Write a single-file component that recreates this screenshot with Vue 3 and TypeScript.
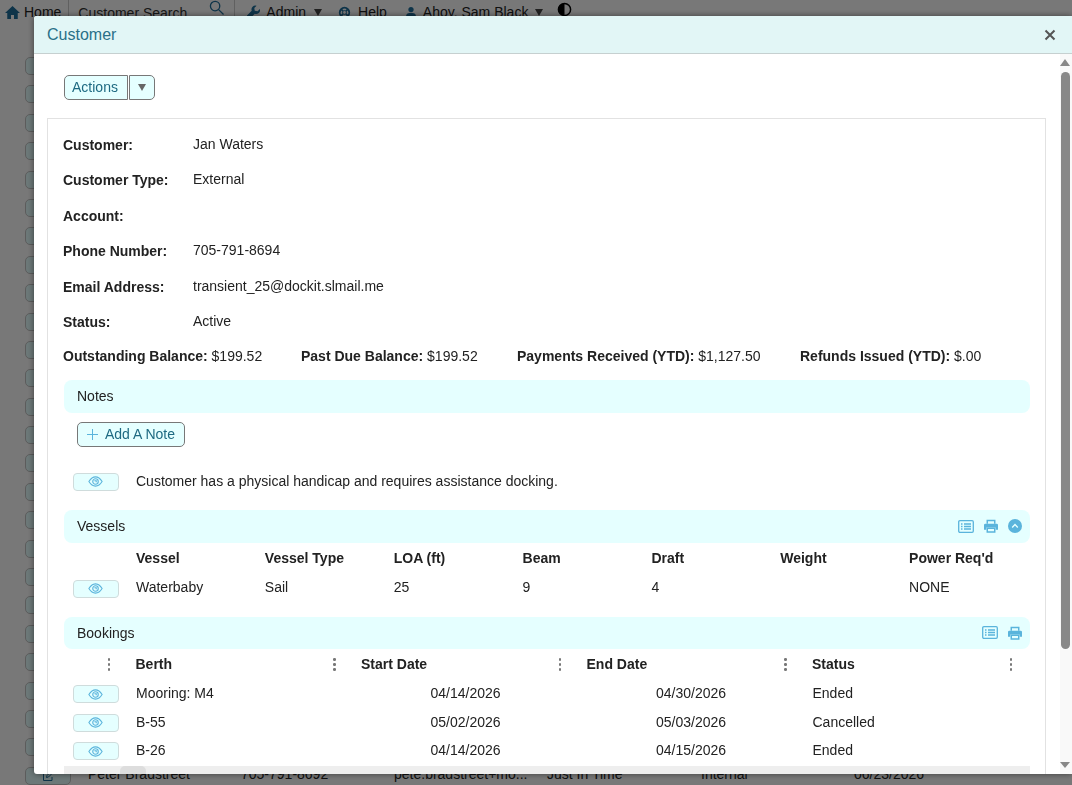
<script setup lang="ts">
const bgRows = Array.from({ length: 26 }, (_, i) => i)

const details: [string, string][] = [
  ['Customer:', 'Jan Waters'],
  ['Customer Type:', 'External'],
  ['Account:', ''],
  ['Phone Number:', '705-791-8694'],
  ['Email Address:', 'transient_25@dockit.slmail.me'],
  ['Status:', 'Active'],
]

const balances = [
  { label: 'Outstanding Balance:', value: '$199.52', width: 238 },
  { label: 'Past Due Balance:', value: '$199.52', width: 216 },
  { label: 'Payments Received (YTD):', value: '$1,127.50', width: 283 },
  { label: 'Refunds Issued (YTD):', value: '$.00', width: 200 },
]

const vesselCols = ['Vessel', 'Vessel Type', 'LOA (ft)', 'Beam', 'Draft', 'Weight', "Power Req'd"]
const vesselRow = ['Waterbaby', 'Sail', '25', '9', '4', '', 'NONE']

const bookingCols = ['Berth', 'Start Date', 'End Date', 'Status']
const bookings = [
  ['Mooring: M4', '04/14/2026', '04/30/2026', 'Ended'],
  ['B-55', '05/02/2026', '05/03/2026', 'Cancelled'],
  ['B-26', '04/14/2026', '04/15/2026', 'Ended'],
]
</script>

<template>
  <div class="page">
    <nav class="nav">
      <svg class="nav-ico home" viewBox="0 0 16 16"><path d="M8 1 0 8.4h2.4V15h4v-4.4h3.200V15h4V8.400H16z" /></svg>
      <span class="nav-home">Home</span>
      <span class="nav-search">Customer Search</span>
      <svg class="nav-mag" viewBox="0 0 16 16"><circle cx="6.500" cy="6.500" r="5" /><path d="m10 10 5.500 5.500" /></svg>
      <span class="nav-sep"></span>
      <svg class="nav-ico wrench" viewBox="0 0 16 16"><path d="M15.800 4.200 13 7 9.500 6.500 9 3l2.800-2.800a4.800 4.800 0 0 0-6 6.200L.6 11.600a2.600 2.600 0 0 0 3.800 3.800l5.200-5.200a4.800 4.800 0 0 0 6.200-6z" /></svg>
      <span class="nav-admin">Admin</span>
      <span class="nav-caret"></span>
      <svg class="nav-ico help" viewBox="0 0 16 16"><path fill-rule="evenodd" d="M8 1a7 7 0 1 0 0 14A7 7 0 0 0 8 1zm0 2.200c1 0 1.900.3 2.600.8L9.200 5.400a2.900 2.900 0 0 0-2.400 0L5.400 4A4.800 4.800 0 0 1 8 3.200zM4 5.400l1.400 1.400a2.900 2.900 0 0 0 0 2.400L4 10.600a4.800 4.800 0 0 1 0-5.200zm8 0a4.800 4.800 0 0 1 0 5.200l-1.400-1.400a2.900 2.900 0 0 0 0-2.400zM8 6.200a1.800 1.800 0 1 1 0 3.600 1.800 1.800 0 0 1 0-3.600zm-1.200 4.400a2.900 2.900 0 0 0 2.400 0l1.400 1.400a4.800 4.800 0 0 1-5.200 0z" /></svg>
      <span class="nav-help">Help</span>
      <svg class="nav-ico user" viewBox="0 0 16 16"><circle cx="8" cy="4" r="3.500" /><path d="M1.500 15v-2.500C1.500 10 3.500 8.500 6 8.500h4c2.500 0 4.500 1.500 4.500 4V15z" /></svg>
      <span class="nav-user">Ahoy, Sam Black</span>
      <span class="nav-caret"></span>
      <svg class="nav-contrast" viewBox="0 0 16 16"><circle cx="8" cy="8" r="6.500" fill="#fff" stroke="#000" stroke-width="1.600" /><path d="M8 1.500a6.500 6.500 0 0 0 0 13z" fill="#000" /></svg>
    </nav>
    <div class="bg-rows">
      <div v-for="i in bgRows" :key="i" class="bg-row">
        <span class="bg-btn">
          <svg v-if="i === 25" class="bg-pen" viewBox="0 0 12 12"><path d="M10 7v3.500H1.500V2H5M4.500 7.500l.5-2L9.500 1 11 2.500 6.500 7z" /></svg>
        </span>
        <template v-if="i === 25">
          <span class="bg-c c1">Peter Bradstreet</span>
          <span class="bg-c c2">705-791-8692</span>
          <span class="bg-c c3">pete.bradstreet+mo...</span>
          <span class="bg-c c4">Just In Time</span>
          <span class="bg-c c5">Internal</span>
          <span class="bg-c c6">06/23/2026</span>
        </template>
      </div>
    </div>
  </div>

  <div class="overlay"></div>

  <section class="modal">
    <header class="modal-head">
      <span class="modal-title">Customer</span>
      <svg class="close" viewBox="0 0 12 12"><path d="m1.500 1.500 9 9m0-9-9 9" /></svg>
    </header>

    <div class="modal-main">
      <div class="content">
        <div class="actions">
          <button class="btn actions-btn">Actions</button>
          <button class="btn caret-btn"><span class="caret-mini"></span></button>
        </div>

        <div class="card">
          <div v-for="row in details" :key="row[0]" class="detail">
            <span class="detail-label">{{ row[0] }}</span>
            <span class="detail-value">{{ row[1] }}</span>
          </div>

          <div class="balances">
            <span v-for="b in balances" :key="b.label" class="balance" :style="{ width: b.width + 'px' }">
              <b>{{ b.label }}</b> {{ b.value }}
            </span>
          </div>

          <div class="band band-notes"><span>Notes</span></div>
          <button class="btn add-note">
            <svg class="plus" viewBox="0 0 11 11"><path d="M5.500 0v11M0 5.500h11" /></svg>
            Add A Note
          </button>
          <div class="note">
            <button class="eye-btn">
              <svg class="eye" viewBox="0 0 16 12"><path d="M.8 6C3 2.500 5.300 1 8 1s5 1.500 7.200 5C13 9.500 10.700 11 8 11S3 9.500.8 6z" /><circle cx="8" cy="6" r="3" /><path d="M6.800 5.200h2v1.600" /></svg>
            </button>
            <span class="lifted">Customer has a physical handicap and requires assistance docking.</span>
          </div>

          <div class="band band-vessels">
            <span>Vessels</span>
            <span class="band-icons">
              <svg class="ico-list" viewBox="0 0 16 13"><rect x=".7" y=".7" width="14.600" height="11.600" rx="1.200" /><path d="M3 4h1.500M6 4h7M3 6.500h1.500M6 6.500h7M3 9h1.500M6 9h7" /></svg>
              <svg class="ico-print" viewBox="0 0 15 14"><path class="paper" d="M3.500 4.500V1h8v3.500" /><path d="M0 6a1.500 1.500 0 0 1 1.500-1.500h12A1.500 1.500 0 0 1 15 6v5h-2.500V8.500h-10V11H0z" /><path class="paper" d="M3.500 9.500h8v4h-8z" /></svg>
              <svg class="ico-up" viewBox="0 0 15 15"><circle cx="7.500" cy="7.500" r="7.500" /><path d="m4.500 9 3-3 3 3" /></svg>
            </span>
          </div>
          <div class="vessel-grid vessel-head">
            <b v-for="c in vesselCols" :key="c">{{ c }}</b>
          </div>
          <div class="vessel-row">
            <button class="eye-btn">
              <svg class="eye" viewBox="0 0 16 12"><path d="M.8 6C3 2.500 5.300 1 8 1s5 1.500 7.200 5C13 9.500 10.700 11 8 11S3 9.500.8 6z" /><circle cx="8" cy="6" r="3" /><path d="M6.800 5.200h2v1.600" /></svg>
            </button>
            <div class="vessel-grid vessel-cells">
              <span v-for="(c, i) in vesselRow" :key="i">{{ c }}</span>
            </div>
          </div>

          <div class="band band-bookings">
            <span>Bookings</span>
            <span class="band-icons">
              <svg class="ico-list" viewBox="0 0 16 13"><rect x=".7" y=".7" width="14.600" height="11.600" rx="1.200" /><path d="M3 4h1.500M6 4h7M3 6.500h1.500M6 6.500h7M3 9h1.500M6 9h7" /></svg>
              <svg class="ico-print" viewBox="0 0 15 14"><path class="paper" d="M3.500 4.500V1h8v3.500" /><path d="M0 6a1.500 1.500 0 0 1 1.500-1.500h12A1.500 1.500 0 0 1 15 6v5h-2.500V8.500h-10V11H0z" /><path class="paper" d="M3.500 9.500h8v4h-8z" /></svg>
            </span>
          </div>
          <div class="book-head">
            <span class="kebab first"><i></i><i></i><i></i></span>
            <div v-for="c in bookingCols" :key="c" class="book-th">
              <b>{{ c }}</b>
              <span class="kebab"><i></i><i></i><i></i></span>
            </div>
          </div>
          <div v-for="b in bookings" :key="b[0]" class="book-row">
            <button class="eye-btn">
              <svg class="eye" viewBox="0 0 16 12"><path d="M.8 6C3 2.500 5.300 1 8 1s5 1.500 7.200 5C13 9.500 10.700 11 8 11S3 9.500.8 6z" /><circle cx="8" cy="6" r="3" /><path d="M6.800 5.200h2v1.600" /></svg>
            </button>
            <div class="book-cells lifted">
              <span>{{ b[0] }}</span>
              <span class="date">{{ b[1] }}</span>
              <span class="date">{{ b[2] }}</span>
              <span>{{ b[3] }}</span>
            </div>
          </div>
          <div class="hbar"><span class="hthumb"></span></div>
        </div>
      </div>

      <aside class="vbar">
        <span class="arrow-up"></span>
        <span class="vthumb"></span>
        <span class="arrow-down"></span>
      </aside>
    </div>
  </section>
</template>

<style>
html, body { margin: 0; height: 785px; overflow: hidden; background: #fff; }
</style>

<style scoped>
.page {
  height: 785px;
  overflow: hidden;
  font: 14px "Liberation Sans", Arial, sans-serif;
  color: #222;
}
.nav {
  display: flex;
  align-items: center;
  height: 24px;
  padding-left: 5px;
}
.nav-ico { fill: #1f6f9c; width: 15px; height: 15px; flex: none; }
.home { margin-right: 4px; }
.nav-search { margin-left: 7px; padding-left: 9px; border-left: 1px solid #ccc; height: 24px; line-height: 27px; width: 124px; color: #333; flex: none; }
.nav-mag { width: 15px; height: 15px; margin: -9px 0 0 7px; fill: none; stroke: #1f6f9c; stroke-width: 1.400; flex: none; }
.nav-sep { width: 1px; height: 24px; background: #ccc; margin: 0 12px 0 10px; flex: none; }
.wrench { width: 13px; height: 14px; }
.nav-admin { margin-left: 6px; }
.nav-caret {
  width: 0; height: 0; margin: 0 16px 0 8px; flex: none;
  border-left: 4px solid transparent;
  border-right: 4px solid transparent;
  border-top: 7px solid #444;
}
.help { width: 13px; height: 13px; margin-right: 7px; }
.nav-help { margin-right: 18px; }
.user { width: 12px; height: 13px; margin-right: 6px; }
.nav-user { margin-right: -1px; }
.nav-contrast { width: 15px; height: 15px; margin: -5px 0 0 -2px; flex: none; }

.bg-rows { padding-top: 33px; }
.bg-row { height: 28.400px; position: relative; }
.bg-btn {
  position: absolute; left: 25px; top: 0;
  width: 44px; height: 16px;
  border: 1px solid #c4c4c4; border-radius: 5px;
  background: #e5ffff;
  display: flex; align-items: center; justify-content: center;
}
.bg-pen { width: 12px; height: 12px; fill: none; stroke: #1f6f9c; stroke-width: 1; }
.bg-c { position: absolute; top: -1px; }
.c1 { left: 88px; }
.c2 { left: 241px; }
.c3 { left: 394px; }
.c4 { left: 547px; }
.c5 { left: 701px; }
.c6 { left: 854px; }

.overlay {
  position: fixed; inset: 0;
  background: rgba(0, 0, 0, 0.53);
}
.modal {
  position: fixed;
  left: 34px; top: 16px; right: 0;
  height: 758px;
  background: #fff;
  border-radius: 3px 0 0 3px;
  box-shadow: 0 0 6px rgba(0, 0, 0, .5);
  display: flex;
  flex-direction: column;
  overflow: hidden;
  font: 14px "Liberation Sans", Arial, sans-serif;
  color: #222;
}
.modal-head {
  height: 37px;
  flex: none;
  background: #e2f6f6;
  border-bottom: 1px solid #c6d0d0;
  display: flex;
  align-items: center;
  justify-content: space-between;
  padding: 0 16px 0 13px;
}
.modal-title { font-size: 16px; color: #2a7088; }
.close { width: 12px; height: 12px; fill: none; stroke: #555; stroke-width: 2; }
.modal-main { flex: 1; display: flex; min-height: 0; }
.content { flex: 1; min-width: 0; padding: 21px 14px 0 13px; overflow: hidden; }

.btn {
  font: inherit;
  color: #1e6a82;
  background: #e5ffff;
  border: 1px solid #777;
  border-radius: 5px;
  padding: 0;
  display: inline-flex;
  align-items: center;
  justify-content: center;
}
.actions { display: flex; gap: 1px; padding-left: 17px; height: 25px; margin-bottom: 18px; }
.actions-btn { width: 64px; height: 25px; border-radius: 5px 0 0 5px; padding: 0 2px 2px 0; }
.caret-btn { width: 26px; height: 25px; border-radius: 0 5px 5px 0; }
.caret-mini {
  width: 0; height: 0;
  border-left: 4px solid transparent;
  border-right: 4px solid transparent;
  border-top: 7px solid #666;
}

.card {
  border: 1px solid #e2e2e2;
  border-bottom: 0;
  padding: 7.900px 15px 0;
  height: 700px;
  box-sizing: border-box;
}
.detail { display: flex; align-items: center; height: 35.400px; }
.detail-label { width: 130px; font-weight: 700; padding-top: 1px; }
.detail-value { margin-top: -1px; }

.balances { display: flex; height: 20px; margin-top: 6.700px; align-items: center; }
.balance { flex: none; white-space: nowrap; }

.band {
  margin-left: 1px;
  height: 33px;
  background: #e5ffff;
  border-radius: 8px;
  display: flex;
  align-items: center;
  justify-content: space-between;
  padding: 0 8px 0 13px;
  box-sizing: border-box;
  width: 966px;
}
.band-notes { margin-top: 14px; }
.band-vessels { margin-top: 19px; }
.band-bookings { margin-top: 19px; height: 32px; }
.band-icons { display: flex; align-items: center; gap: 10px; }
.ico-list { width: 16px; height: 13px; fill: none; stroke: #5ab4dc; stroke-width: 1.300; }
.ico-print { width: 14px; height: 14px; fill: #5ab4dc; }
.ico-print .paper { fill: #e5ffff; stroke: #5ab4dc; stroke-width: 1.600; }
.ico-up { width: 14px; height: 14px; fill: #5ab4dc; stroke: none; }
.ico-up path { fill: none; stroke: #e5ffff; stroke-width: 1.500; }

.add-note {
  display: flex;
  width: 108px;
  height: 25px;
  margin: 9px 0 0 14px;
  color: #1e6a82;
  gap: 7px;
}
.plus { width: 11px; height: 11px; fill: none; stroke: #5ab4dc; stroke-width: 1; }

.eye-btn {
  width: 46px; height: 18px;
  padding: 0;
  flex: none;
  background: #e5ffff;
  border: 1px solid #cfdcdc;
  border-radius: 4px;
  display: flex; align-items: center; justify-content: center;
}
.eye { width: 15px; height: 11px; fill: none; stroke: #5ab4dc; stroke-width: 1.200; margin-left: -1px; }
.lifted { margin-top: -2px; }

.note { display: flex; align-items: center; gap: 17px; margin: 26px 0 0 10px; height: 18px; }

.vessel-grid { display: grid; grid-template-columns: repeat(7, 128.850px); flex: 1; }
.vessel-head { margin: 6px 0 0 73px; height: 18px; align-items: center; }
.vessel-row { display: flex; align-items: center; gap: 17px; margin: 13px 0 0 10px; height: 18px; }
.vessel-cells { margin-top: -4px; }

.book-head { display: flex; align-items: center; height: 31px; }
.kebab { display: inline-flex; flex-direction: column; gap: 2.500px; width: 3px; }
.kebab i { display: block; width: 2.500px; height: 2.500px; border-radius: 50%; background: #777; }
.kebab.first { margin: 0 25.500px 0 44.500px; }
.book-th { width: 225.500px; display: flex; align-items: center; justify-content: space-between; padding-right: 25px; box-sizing: border-box; flex: none; }
.book-row { display: flex; align-items: center; gap: 17px; margin: 0 0 0 10px; height: 28.500px; }
.book-cells { display: grid; grid-template-columns: 225.500px 225.500px 225.500px 1fr; flex: 1; }
.date { padding-left: 69px; }
.hbar { margin: 1px 0 0 1px; height: 10px; width: 966px; background: #eee; position: relative; }
.hthumb { position: absolute; left: 56px; top: 0; width: 26px; height: 10px; background: #ddd; border-radius: 5px 5px 0 0; }

.vbar {
  flex: none;
  width: 12px;
  background: #f9f9f9;
  display: flex;
  flex-direction: column;
  align-items: center;
  box-sizing: border-box;
  padding-top: 5px;
  padding-right: 2px;
}
.arrow-up, .arrow-down { width: 0; height: 0; border-left: 5px solid transparent; border-right: 5px solid transparent; }
.arrow-up { border-bottom: 7px solid #888; margin-bottom: 6px; }
.vthumb { width: 9px; height: 577px; background: #888; border-radius: 5px; }
.arrow-down { border-top: 6px solid #888; margin-top: 113px; }
</style>
